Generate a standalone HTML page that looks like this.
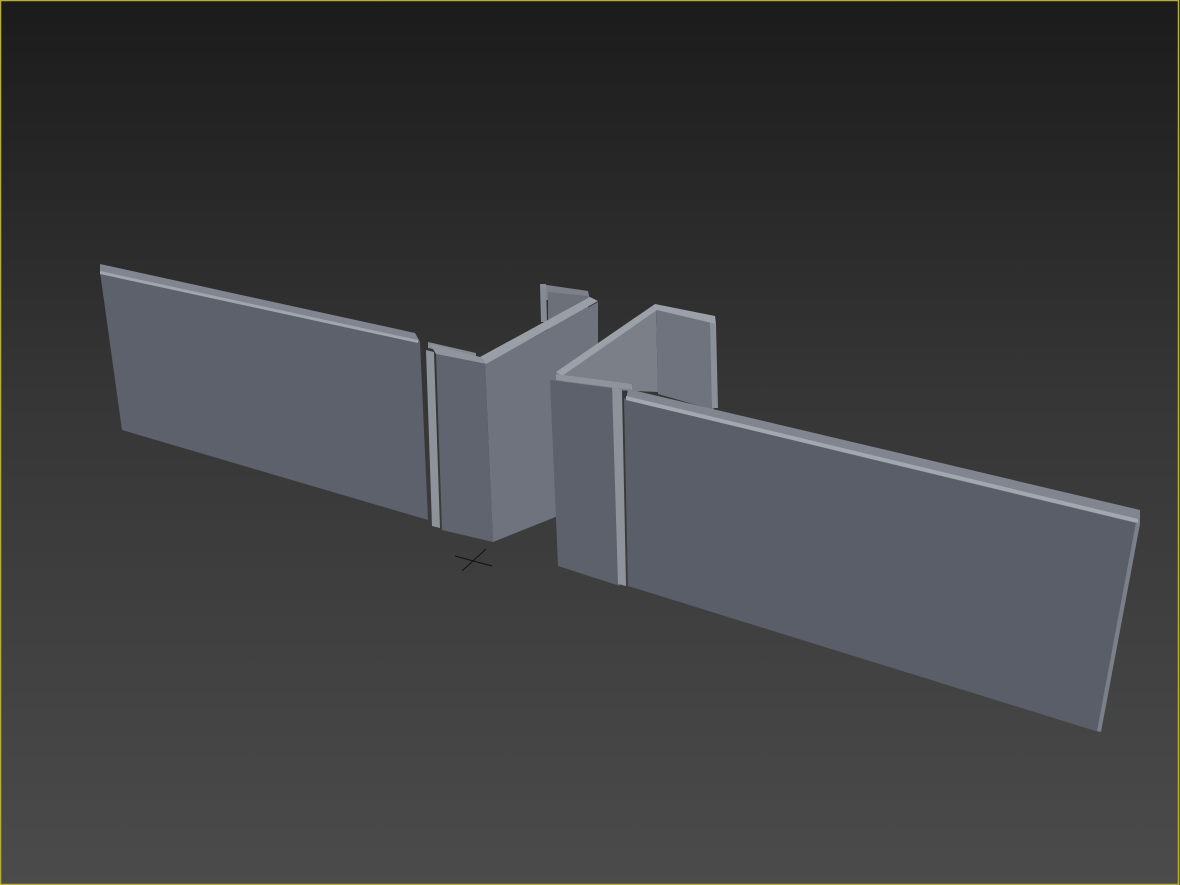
<!DOCTYPE html>
<html><head><meta charset="utf-8"><style>
html,body{margin:0;padding:0;width:1180px;height:885px;overflow:hidden;background:#333}
svg{display:block}
</style></head><body>
<svg width="1180" height="885" viewBox="0 0 1180 885" xmlns="http://www.w3.org/2000/svg">
<defs>
<linearGradient id="bg" x1="0" y1="0" x2="0" y2="1">
<stop offset="0" stop-color="#1b1b1b"/>
<stop offset="0.45" stop-color="#363636"/>
<stop offset="1" stop-color="#4b4b4b"/>
</linearGradient>
</defs>
<rect width="1180" height="885" fill="url(#bg)"/>
<!-- left box interior back -->
<polygon points="540,284 588,291 590,300 545,300" fill="#7c8089"/>
<polygon points="540,284 546,284 547,322 541,322" fill="#858a93"/>
<polygon points="548,292 588,296 588,340 548,330" fill="#6c7079"/>
<!-- left long wall -->
<polygon points="100,272 420,342 428,520 122,430" fill="#5d616b"/>
<polygon points="100,264 415,333 420,342 100,272" fill="#80858f"/>
<polygon points="100,271 418,340 418,343 100,274" fill="#a1a6ae"/>
<!-- gap strip -->
<polygon points="426,350 434,352 440,528 432,526" fill="#8d929b"/>
<polygon points="428,342 476,353 476,358 428,348" fill="#858a93"/>
<!-- box front -->
<polygon points="436,354 485,364 493,542 442,530" fill="#60646e"/>
<!-- box side -->
<polygon points="485,364 598,302 598,500 493,542" fill="#6f737d"/>
<!-- box top rim -->
<polygon points="480,357 590,297 598,301 486,364" fill="#9a9fa7"/>
<polygon points="430,344 480,357 486,364 436,354" fill="#8f949d"/>
<!-- right structure interior -->
<polygon points="560,372 656,308 658,392 565,388" fill="#7b7f88"/>
<polygon points="656,308 712,322 714,410 658,394" fill="#6f737d"/>
<polygon points="710,322 716,324 718,408 712,408" fill="#8a8f98"/>
<polygon points="556,372 655,304 715,316 716,324 657,310 562,376" fill="#9ca1a9"/>
<polygon points="556,374 632,384 632,390 556,380" fill="#8e939c"/>
<!-- left column front -->
<polygon points="550,380 612,388 620,586 558,566" fill="#5d616b"/>
<polygon points="612,386 622,390 626,586 618,584" fill="#8d929b"/>
<!-- right long wall -->
<polygon points="624,398 1138,522 1099,732 628,586" fill="#5a5e68"/>
<polygon points="628,389 1140,510 1140,524 626,400" fill="#80858f"/>
<polygon points="626,396 1138,519 1138,523 626,400" fill="#a3a8b0"/>
<polygon points="1136,522 1140,524 1101,732 1097,731" fill="#7a7f88"/>
<!-- pivot cross -->
<line x1="455" y1="556" x2="492" y2="566" stroke="#111" stroke-width="1"/>
<line x1="486" y1="549" x2="462" y2="571" stroke="#111" stroke-width="1"/>
<!-- yellow border -->
<rect x="0.5" y="0.5" width="1178" height="884" fill="none" stroke="#b9ad3a" stroke-width="1.5"/>
</svg>
</body></html>
